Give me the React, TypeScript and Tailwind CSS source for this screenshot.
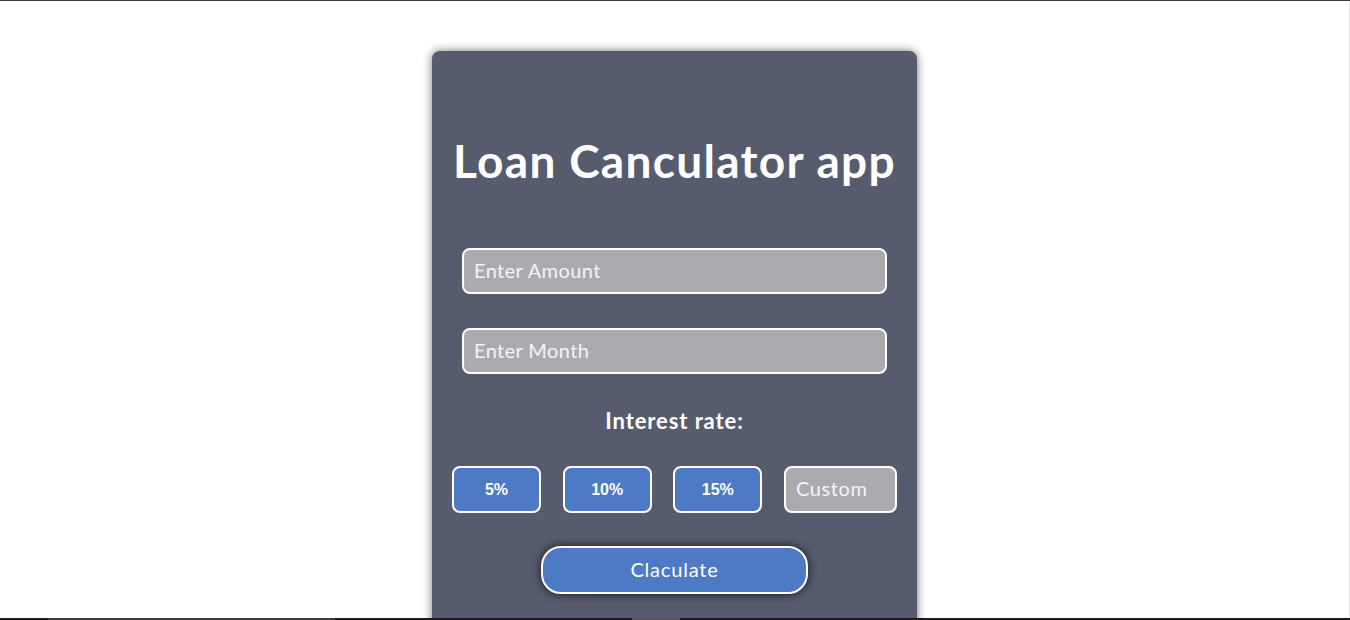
import React from "react";

export default function App() {
  const rates = ["5%", "10%", "15%"];
  return (
    <div className="h-[620px] w-[1350px] flex flex-col overflow-hidden bg-white">
      <div className="h-px bg-[#3a3a3a]" />
      <div className="flex-1 flex overflow-hidden">
        <div className="flex-1 flex justify-center overflow-hidden pt-[50px]">
          <div
            className="w-[485px] h-[640px] shrink-0 rounded-lg bg-[#565c6e] shadow-[0_0_10px_rgba(0,0,0,0.55)] flex flex-col text-white"
            style={{ fontFamily: "Lato, 'Noto Sans', sans-serif" }}
          >
            <h1 className="mt-[82px] text-center text-[46px] leading-[56px] font-bold tracking-[1.3px]">
              Loan Canculator app
            </h1>
            <input
              placeholder="Enter Amount"
              className="mt-[59px] ml-[30px] w-[425px] h-[46px] rounded-lg border-2 border-white bg-[#abaab0] px-[10px] pb-[3px] text-[20px] tracking-[0.4px] text-white placeholder:text-[#f4f4f4] outline-none"
            />
            <input
              placeholder="Enter Month"
              className="mt-[34px] ml-[30px] w-[425px] h-[46px] rounded-lg border-2 border-white bg-[#abaab0] px-[10px] pb-[3px] text-[20px] tracking-[0.4px] text-white placeholder:text-[#f4f4f4] outline-none"
            />
            <div className="mt-[33px] text-center text-[22px] leading-[28px] font-bold tracking-[0.9px]">
              Interest rate:
            </div>
            <div className="mt-[31px] ml-[20px] w-[445px] flex justify-between">
              {rates.map((r) => (
                <button
                  key={r}
                  className="w-[89px] h-[47px] rounded-lg border-2 border-white bg-[#4d7ac4] text-[16px] font-bold text-white"
                  style={{ fontFamily: "'Liberation Sans', Arial, sans-serif" }}
                >
                  {r}
                </button>
              ))}
              <input
                placeholder="Custom"
                className="w-[113px] h-[47px] rounded-lg border-2 border-white bg-[#abaab0] px-[10px] pb-[3px] text-[20px] tracking-[0.6px] text-white placeholder:text-[#f4f4f4] outline-none"
              />
            </div>
            <div className="mt-[33px] flex justify-center">
              <button className="w-[267px] h-[48px] rounded-[20px] border-2 border-white bg-[#4d7ac4] pb-[2px] text-[20px] tracking-[0.8px] text-white shadow-[0_0_10px_rgba(0,0,0,0.75)]">
                Claculate
              </button>
            </div>
          </div>
        </div>
        <div className="w-px bg-[#e6e6e6]" />
      </div>
      <div className="h-[2px] flex bg-[#1c1c1c]">
        <div className="w-[48px]" />
        <div className="w-[287px] bg-[#3d3d3d]" />
        <div className="w-[297px]" />
        <div className="w-[48px] bg-[#555555]" />
      </div>
    </div>
  );
}
